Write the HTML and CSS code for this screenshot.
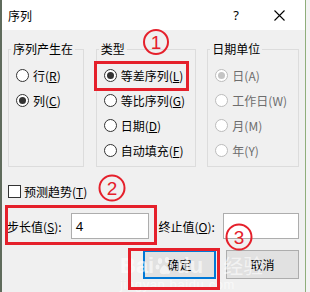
FILE: index.html
```html
<!DOCTYPE html>
<html lang="zh-CN">
  <head>
    <meta charset="utf-8" />
    <title>序列</title>
    <link rel="stylesheet" href="styles.css">
  </head>
  <body>
    <div class="window">
      <div class="titlebar">
        <span class="title">序列</span>
        <span class="help">?</span>
        <span class="close">
          <svg width="11" height="11" viewBox="0 0 11 11"><path d="M0.5 0.5 L10.5 10.5 M10.5 0.5 L0.5 10.5" stroke="#000" stroke-width="1.1" fill="none"/></svg>
        </span>
      </div>
      <div class="content">
        <div class="groups">
          <fieldset class="group g1">
            <legend>序列产生在</legend>
            <label class="opt"><span class="radio"></span>行(<u>R</u>)</label>
            <label class="opt"><span class="radio on"></span>列(<u>C</u>)</label>
          </fieldset>
          <fieldset class="group g2">
            <legend>类型</legend>
            <label class="opt"><span class="radio on"></span>等差序列(<u>L</u>)</label>
            <label class="opt"><span class="radio"></span>等比序列(<u>G</u>)</label>
            <label class="opt"><span class="radio"></span>日期(<u>D</u>)</label>
            <label class="opt"><span class="radio"></span>自动填充(<u>F</u>)</label>
          </fieldset>
          <fieldset class="group g3 disabled">
            <legend>日期单位</legend>
            <label class="opt"><span class="radio on"></span>日(A)</label>
            <label class="opt"><span class="radio"></span>工作日(W)</label>
            <label class="opt"><span class="radio"></span>月(M)</label>
            <label class="opt"><span class="radio"></span>年(Y)</label>
          </fieldset>
        </div>
        <label class="check"><span class="box"></span>预测趋势(<u>T</u>)</label>
        <div class="values">
          <span class="lbl lbl1">步长值(<u>S</u>):</span>
          <span class="field f1">4</span>
          <span class="lbl lbl2">终止值(<u>O</u>):</span>
          <span class="field f2"></span>
        </div>
        <div class="buttons">
          <button class="btn default">确定</button>
          <button class="btn">取消</button>
        </div>
      </div>
    </div>

    <!-- baidu jingyan watermark over the buttons -->
    <div class="watermark">
      <div class="wm-line">
        <span class="wm-big">Bai</span>
        <svg class="paw" width="20" height="20" viewBox="0 0 20 20">
          <ellipse cx="5" cy="5" rx="2.2" ry="3"/>
          <ellipse cx="12" cy="4" rx="2.2" ry="3"/>
          <ellipse cx="2.5" cy="11" rx="2" ry="2.6"/>
          <ellipse cx="16.5" cy="9.5" rx="2" ry="2.6"/>
          <path d="M9 9 C5 12 3 17 7 18 C9 18.5 11 17.5 13 18 C17 18 15 12 9 9 Z"/>
        </svg>
        <span class="wm-big">du</span>
        <span class="wm-cn">经验</span>
      </div>
      <span class="wm-small">jingyan.baidu.com</span>
    </div>

    <svg class="marks" width="310" height="292" viewBox="0 0 310 292">
      <g fill="none" stroke="#e5202b">
        <rect x="95.5" y="62.5" width="92" height="27" stroke-width="3"/>
        <rect x="6.5" y="206.5" width="149" height="37" stroke-width="3"/>
        <rect x="129.5" y="249.5" width="89" height="39" stroke-width="3"/>
        <circle cx="156" cy="42" r="12" stroke-width="2"/>
        <circle cx="112" cy="188" r="12.5" stroke-width="2"/>
        <circle cx="239" cy="237" r="12.5" stroke-width="2"/>
      </g>
      <g fill="#e5202b" font-family="Liberation Sans, sans-serif" font-size="19" text-anchor="middle">
        <text x="156" y="49">1</text>
        <text x="112" y="195">2</text>
        <text x="239" y="244">3</text>
      </g>
    </svg>
  </body>
</html>
```

FILE: styles.css
```css
* { box-sizing: border-box; }
body {
  margin: 0;
  width: 310px;
  height: 292px;
  background: #f3f3f3;
  font-family: "Noto Sans CJK SC", "Noto Sans", sans-serif;
  font-size: 12px;
  color: #000;
  position: relative;
  overflow: hidden;
}
u { text-decoration: underline; text-underline-offset: 1px; }

.window {
  width: 306px;
  height: 292px;
  border-left: 2px solid #5f6b5c;
  border-right: 1px solid #8fae7b;
  background: #f0f0f0;
}
.titlebar {
  height: 30px;
  background: #fff;
  display: flex;
  align-items: center;
  padding-left: 6px;
}
.title { font-size: 12px; flex: 1; }
.help { width: 14px; text-align: center; font-family: "Noto Sans", sans-serif; font-size: 13px; margin-right: 31px; }
.close { width: 11px; height: 11px; display: flex; margin-right: 20px; }

.content { padding: 11px 6px 0 6px; }
.groups { display: flex; gap: 12px; }
.group {
  margin: 0;
  padding: 6px 0 3px 0;
  border: 1px solid #dcdcdc;
  min-width: 0;
}
.group legend { padding: 0 2px; margin-left: 2px; line-height: 16px; }
.g1 { width: 76px; }
.g2 { width: 101px; }
.g3 { width: 92px; margin-left: -1px; }

.opt {
  display: flex;
  align-items: center;
  height: 25px;
  padding-left: 7px;
  white-space: nowrap;
}
.radio {
  width: 13px;
  height: 13px;
  border: 1px solid #333;
  border-radius: 50%;
  background: #fff;
  margin-right: 4px;
  display: flex;
  align-items: center;
  justify-content: center;
}
.radio.on::after {
  content: "";
  width: 7px;
  height: 7px;
  border-radius: 50%;
  background: #333;
}
.disabled .opt { color: #6d6d6d; }
.disabled .radio { border-color: #bcbcbc; }
.disabled .radio.on::after { background: #c4c4c4; }

.check {
  display: flex;
  align-items: center;
  height: 16px;
  margin-top: 16px;
}
.box {
  width: 13px;
  height: 13px;
  border: 1px solid #333;
  background: #fff;
  margin-right: 3px;
}

.values {
  display: flex;
  align-items: center;
  margin-top: 14px;
  height: 26px;
}
.lbl { white-space: nowrap; }
.lbl1 { width: 64px; margin-left: -1px; }
.lbl2 { width: 65px; margin-left: 10px; }
.field {
  height: 26px;
  background: #fff;
  border: 1px solid #adadad;
  padding-left: 4px;
  font-size: 13px;
  line-height: 24px;
  font-family: "Noto Sans", sans-serif;
}
.f1 { width: 78px; }
.f2 { width: 76px; }

.buttons {
  display: flex;
  justify-content: flex-end;
  gap: 10px;
  margin-top: 11px;
}
.btn {
  width: 73px;
  height: 29px;
  background: #e1e1e1;
  border: 1px solid #adadad;
  font-family: inherit;
  font-size: 12px;
  padding: 0;
}
.btn.default { border: 2px solid #0078d7; }

.watermark {
  position: absolute;
  left: 120px;
  top: 254px;
  width: 175px;
  color: rgba(255, 255, 255, 0.6);
  pointer-events: none;
}
.wm-line { display: flex; align-items: center; height: 24px; }
.wm-big { font-family: "Liberation Sans", sans-serif; font-weight: bold; font-size: 22px; line-height: 24px; }
.paw { fill: rgba(255, 255, 255, 0.6); margin: 0 1px; }
.wm-cn { font-size: 20px; line-height: 24px; margin-left: 20px; }
.wm-small { display: block; font-family: "Liberation Sans", sans-serif; font-size: 13px; line-height: 14px; letter-spacing: 0.6px; }

.marks { position: absolute; left: 0; top: 0; pointer-events: none; }
```
